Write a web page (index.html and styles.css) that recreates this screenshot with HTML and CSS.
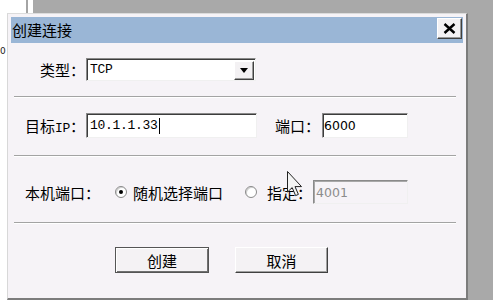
FILE: index.html
```html
<!DOCTYPE html>
<html lang="zh-CN">
<head>
<meta charset="utf-8">
<title>创建连接</title>
<link rel="stylesheet" href="styles.css">
</head>
<body>
<div class="desktop">
  <div class="pane-left"><span class="stray">0</span></div>
  <div class="pane-line"></div>
  <div class="pane-gap"></div>
  <div class="pane-gray"></div>

  <div class="dialog">
    <div class="titlebar">
      <span class="title">创建连接</span>
      <span class="close">
        <svg width="13" height="11" viewBox="0 0 13 11"><path d="M1.5 1 L11.5 10 M11.5 1 L1.5 10" stroke="#000" stroke-width="2.4" fill="none"/></svg>
      </span>
    </div>
    <div class="content">
      <div class="row row-type">
        <span class="label label-type">类型：</span>
        <div class="select">
          <span class="mono select-value">TCP</span>
          <span class="drop"><svg width="8" height="5" viewBox="0 0 8 5"><path d="M0 0 H8 L4 5 Z" fill="#000"/></svg></span>
        </div>
      </div>
      <div class="sep"></div>
      <div class="row row-ip">
        <span class="label label-ip">目标<span class="mono">IP</span>：</span>
        <div class="field field-ip"><span class="mono">10.1.1.33</span><span class="caret"></span></div>
        <span class="label label-port">端口：</span>
        <div class="field field-port"><span class="num">6000</span></div>
      </div>
      <div class="sep sep-2"></div>
      <div class="row row-local">
        <span class="label label-local">本机端口：</span>
        <span class="radio checked"></span><span class="radio-text text-random">随机选择端口</span>
        <span class="radio radio-2"></span><span class="radio-text text-fixed">指定：</span>
        <div class="field field-local disabled"><span class="num">4001</span></div>
      </div>
      <div class="sep sep-3"></div>
      <div class="row row-buttons">
        <div class="btn btn-default">创建</div>
        <div class="btn">取消</div>
      </div>
    </div>
  </div>

  <svg class="cursor" width="16" height="27" viewBox="0 0 16 27">
    <path d="M0.5 0.5 V21 L5.2 16.6 L8.6 24.6 L11.4 23.4 L8 15.6 H14.5 Z" fill="#f4f4f4" stroke="#222" stroke-width="1" stroke-linejoin="round"/>
  </svg>
</div>
</body>
</html>
```

FILE: styles.css
```css
* { box-sizing: border-box; }
html, body { margin: 0; padding: 0; }
body {
  width: 493px;
  height: 300px;
  overflow: hidden;
  font-family: "Noto Sans CJK SC", "Noto Sans", sans-serif;
  font-size: 15px;
  color: #000;
  background: #a9a9a9;
}
.desktop {
  position: relative;
  width: 493px;
  height: 300px;
  display: flex;
  overflow: hidden;
}
.pane-left { width: 26px; background: #fff; position: relative; overflow: hidden; }
.pane-line { width: 2px; background: #a4a4a4; }
.pane-gap { width: 5px; background: #fff; }
.pane-gray { flex: 1; background: #a9a9a9; }
.stray {
  position: absolute;
  left: 0;
  top: 46px;
  font-family: "DejaVu Sans", sans-serif;
  font-size: 9px;
  color: #222;
}

.dialog {
  position: absolute;
  left: 7px;
  top: 13px;
  width: 461px;
  height: 287px;
  background: #f6f3f7;
  border-top: 1px solid #dcdcdc;
  border-left: 1px solid #d8d8d8;
  border-right: 2px solid #7c7c7c;
  border-bottom: 2px solid #7c7c7c;
  padding: 3px;
  display: flex;
  flex-direction: column;
}
.titlebar {
  height: 26px;
  background: #9ab6d6;
  display: flex;
  align-items: flex-start;
  justify-content: space-between;
}
.title {
  margin-left: 1px;
  line-height: 26px;
  font-size: 15px;
}
.close {
  margin-top: 1px;
  margin-right: 1px;
  width: 25px;
  height: 21px;
  background: #f3f1f3;
  border-top: 1px solid #fff;
  border-left: 1px solid #fff;
  border-right: 1px solid #404040;
  border-bottom: 1px solid #404040;
  box-shadow: inset -1px -1px 0 #9a9a9a;
  display: flex;
  align-items: center;
  justify-content: center;
}

.content { display: flex; flex-direction: column; }
.row { display: flex; align-items: center; }
.label { white-space: nowrap; }
.mono { font-family: "Liberation Mono", monospace; font-size: 13px; letter-spacing: -0.3px; }
.num { font-family: "DejaVu Sans", sans-serif; font-size: 12.5px; }

.row-type { margin-top: 15px; height: 23px; padding-left: 29px; }
.label-type { width: 46px; }
.select {
  width: 170px;
  height: 23px;
  background: #fff;
  border-top: 1px solid #8a8a8a;
  border-left: 1px solid #8a8a8a;
  border-right: 1px solid #f0f0f0;
  border-bottom: 1px solid #f0f0f0;
  box-shadow: inset 1px 1px 0 #3c3c3c;
  display: flex;
  align-items: center;
  justify-content: space-between;
  padding-left: 3px;
  padding-right: 1px;
}
.drop {
  width: 20px;
  height: 19px;
  background: #f3f1f3;
  border-top: 1px solid #fff;
  border-left: 1px solid #fff;
  border-right: 1px solid #404040;
  border-bottom: 1px solid #404040;
  box-shadow: inset -1px -1px 0 #9a9a9a;
  display: flex;
  align-items: center;
  justify-content: center;
  margin-top: 1px;
}

.sep {
  margin: 15px 7px 0 3px;
  height: 2px;
  border-top: 1px solid #a3a3a3;
  border-bottom: 1px solid #fff;
}
.sep-2 { margin-top: 17px; }
.sep-3 { margin-top: 18px; }

.row-ip { margin-top: 15px; height: 25px; padding-left: 14px; }
.label-ip { width: 61px; }
.field {
  height: 25px;
  background: #fff;
  border-top: 1px solid #8a8a8a;
  border-left: 1px solid #8a8a8a;
  border-right: 1px solid #f0f0f0;
  border-bottom: 1px solid #f0f0f0;
  box-shadow: inset 1px 1px 0 #3c3c3c;
  display: flex;
  align-items: center;
}
.field-ip { width: 171px; padding-left: 3px; }
.caret { width: 1px; height: 16px; background: #000; margin-left: 1px; }
.label-port { margin-left: 18px; width: 47px; }
.field-port { width: 86px; padding-left: 1px; }

.row-local { margin-top: 23px; height: 24px; padding-left: 14px; }
.label-local { width: 90px; }
.radio {
  width: 12px;
  height: 12px;
  border-radius: 50%;
  background: #fff;
  border: 1px solid #8a8a8a;
  box-shadow: inset 1px 1px 0 #d0d0d0;
  display: flex;
  align-items: center;
  justify-content: center;
  flex: none;
}
.radio.checked::after {
  content: "";
  width: 4px;
  height: 4px;
  border-radius: 50%;
  background: #000;
}
.radio-text { white-space: nowrap; }
.text-random { margin-left: 6px; }
.radio-2 { margin-left: 22px; }
.text-fixed { margin-left: 10px; }
.field-local {
  margin-left: 1px;
  width: 95px;
  height: 24px;
  padding-left: 2px;
}
.field.disabled { background: #f6f3f7; color: #8c8c8c; box-shadow: inset 1px 1px 0 #a8a8a8; }

.row-buttons { margin-top: 23px; height: 26px; padding-left: 104px; gap: 26px; }
.btn {
  width: 93px;
  height: 26px;
  background: #f4f2f4;
  border-top: 1px solid #fff;
  border-left: 1px solid #fff;
  border-right: 1px solid #404040;
  border-bottom: 1px solid #404040;
  box-shadow: inset -1px -1px 0 #a0a0a0;
  display: flex;
  align-items: center;
  justify-content: center;
}
.btn-default {
  width: 94px;
  border: 1px solid #555;
  box-shadow: inset 1px 1px 0 #fff, inset -1px -1px 0 #707070;
}

.cursor {
  position: absolute;
  left: 287px;
  top: 171px;
}
```
